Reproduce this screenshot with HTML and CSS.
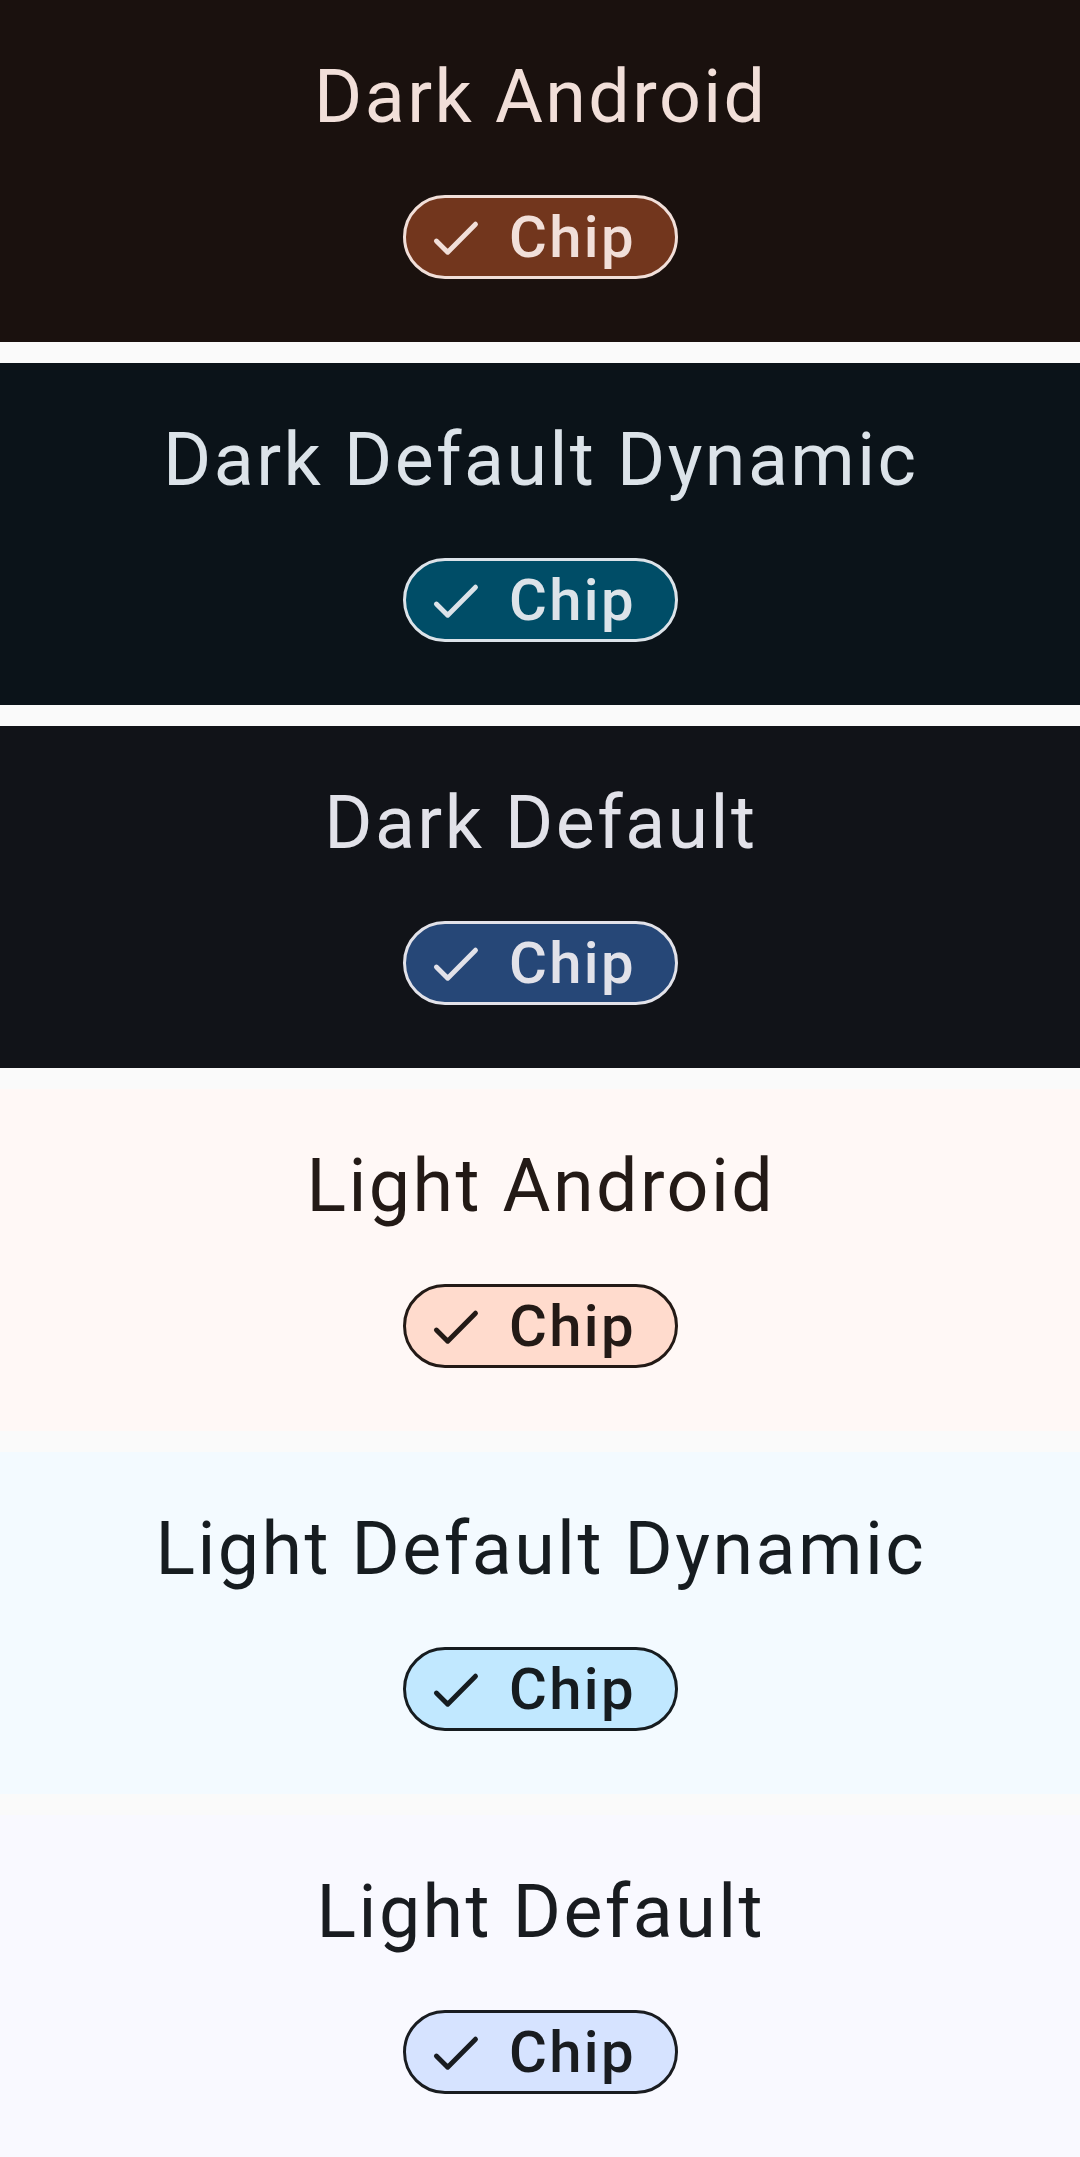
FILE: index.html
```html
<!DOCTYPE html>
<html lang="en"><head><meta charset="utf-8"><title>Chip themes</title><link rel="stylesheet" href="styles.css"></head>
<body>
<main class="themes">
<section class="theme dark-android"><h2 class="title">Dark Android</h2><div class="chip"><svg class="check" viewBox="0 0 48 48"><path d="M4.4 28 15.7 39.2 43.5 11.2"/></svg><span class="label">Chip</span></div></section>
<section class="theme dark-dynamic"><h2 class="title">Dark Default Dynamic</h2><div class="chip"><svg class="check" viewBox="0 0 48 48"><path d="M4.4 28 15.7 39.2 43.5 11.2"/></svg><span class="label">Chip</span></div></section>
<section class="theme dark-default"><h2 class="title">Dark Default</h2><div class="chip"><svg class="check" viewBox="0 0 48 48"><path d="M4.4 28 15.7 39.2 43.5 11.2"/></svg><span class="label">Chip</span></div></section>
<section class="theme light-android"><h2 class="title">Light Android</h2><div class="chip"><svg class="check" viewBox="0 0 48 48"><path d="M4.4 28 15.7 39.2 43.5 11.2"/></svg><span class="label">Chip</span></div></section>
<section class="theme light-dynamic"><h2 class="title">Light Default Dynamic</h2><div class="chip"><svg class="check" viewBox="0 0 48 48"><path d="M4.4 28 15.7 39.2 43.5 11.2"/></svg><span class="label">Chip</span></div></section>
<section class="theme light-default"><h2 class="title">Light Default</h2><div class="chip"><svg class="check" viewBox="0 0 48 48"><path d="M4.4 28 15.7 39.2 43.5 11.2"/></svg><span class="label">Chip</span></div></section>
</main>
</body></html>
```
FILE: styles.css
```css
* { box-sizing: border-box; }
body { margin: 0; background: #fafafa; font-family: Roboto, sans-serif; }
.themes { display: flex; flex-direction: column; gap: 21px; }
.theme { height: 342px; padding-top: 64px; display: flex; flex-direction: column; align-items: center; background: var(--surface); color: var(--ink); }
.title { margin: 0; padding-left: 1.6px; font-size: 73.5px; font-weight: 400; line-height: 66px; letter-spacing: 2.45px; white-space: nowrap; }
.chip { margin-top: 65px; width: 275px; height: 84px; display: flex; align-items: center; padding-left: 26px; border: 3px solid var(--ink); border-radius: 42px; background: var(--chip); }
.check { width: 48px; height: 48px; fill: none; stroke: currentColor; stroke-width: 4.9; stroke-linecap: round; stroke-linejoin: round; }
.label { margin-left: 29.5px; font-size: 58px; font-weight: 500; line-height: 66px; letter-spacing: 2.35px; }
.dark-android { --surface: #1a110e; --ink: #f1dfd9; --chip: #72361d; }
.dark-dynamic { --surface: #0b1319; --ink: #dce3e9; --chip: #004d67; }
.dark-default { --surface: #111318; --ink: #e2e2e9; --chip: #264777; }
.light-android { --surface: #fff8f6; --ink: #231a16; --chip: #ffdbcd; }
.light-dynamic { --surface: #f3faff; --ink: #161c20; --chip: #c1e8ff; }
.light-default { --surface: #f9f9ff; --ink: #191c20; --chip: #d6e3ff; }
```
